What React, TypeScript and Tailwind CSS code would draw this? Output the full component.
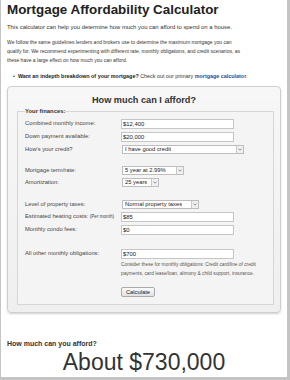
import React from "react";

const labelCls = "w-[96px] shrink-0 pt-[1px] text-[5.8px] leading-[7px] text-[#444]";

function TextInput({ value }: { value: string }) {
  return (
    <div className="flex h-[10px] w-[113px] items-center border border-[#c6c6c6] bg-white px-[1px] text-[5.9px] text-[#222]">
      {value}
    </div>
  );
}

function Select({ value, width }: { value: string; width: string }) {
  return (
    <div className={`flex h-[9px] items-center justify-between border border-[#bdbdbd] bg-white pl-[2px] text-[5.8px] text-[#222] ${width}`}>
      <span className="truncate">{value}</span>
      <span className="flex h-full w-[7px] items-center justify-center border-l border-[#c8c8c8] bg-[#f0f0f0]">
        <svg width="4" height="3" viewBox="0 0 4 3">
          <path d="M0.5 0.6 L2 2.2 L3.5 0.6" fill="none" stroke="#666" strokeWidth="0.7" />
        </svg>
      </span>
    </div>
  );
}

function Row({ label, children }: { label: React.ReactNode; children: React.ReactNode }) {
  return (
    <div className="flex items-start">
      <div className={labelCls}>{label}</div>
      {children}
    </div>
  );
}

export default function App() {
  return (
    <div className="h-[380px] w-[290px] overflow-hidden border-l border-r-[3px] border-b-[3px] border-[#c4c4c4] bg-white font-['Liberation_Sans',Arial,sans-serif] text-[#333]">
      <div className="px-[6px] pt-[1px]">
        <h1 className="text-[13.4px] font-bold leading-[17px] text-[#222]">Mortgage Affordability Calculator</h1>

        <p className="mt-[5px] text-[5.9px] leading-[9px]">
          This calculator can help you determine how much you can afford to spend on a house.
        </p>

        {/* keep the reference's line breaks */}
        <p className="mt-[6px] whitespace-nowrap text-[5px] leading-[9px]">
          We follow the same guidelines lenders and brokers use to determine the maximum mortgage you can
          <br />
          qualify for. We recommend experimenting with different rate, monthly obligations, and credit scenarios, as
          <br />
          these have a large effect on how much you can afford.
        </p>

        <ul className="mt-[7px] pl-[6px] text-[5.4px] leading-[9px]">
          <li className="flex gap-[3px]">
            <span>•</span>
            <span>
              <b className="text-[#222]">Want an indepth breakdown of your mortgage?</b> Check out our primary{" "}
              <b className="text-[#1f4e96]">mortgage calculator</b>.
            </span>
          </li>
        </ul>

        <div className="mt-[5px] rounded-[4px] border border-[#cfcfcf] bg-gradient-to-b from-[#f7f7f7] to-[#efefef] px-[9px] pb-[7px] pt-[7px] shadow-[0_1px_2px_rgba(0,0,0,0.18)]">
          <h2 className="text-center text-[9.2px] font-bold leading-[12px] text-[#333]">How much can I afford?</h2>

          <fieldset className="mt-[2px] border border-[#d6d6d6] bg-[#f4f4f4] pl-[7px] pr-[4px] pb-[7px]">
            <legend className="text-[5.9px] font-bold leading-[7px] text-[#333]">Your finances:</legend>

            <div className="mt-[4px] flex flex-col gap-[3px]">
              <Row label="Combined monthly income:">
                <TextInput value="$12,400" />
              </Row>
              <Row label="Down payment available:">
                <TextInput value="$20,000" />
              </Row>
              <Row label="How's your credit?">
                <Select value="I have good credit" width="w-[122px] ml-[1px]" />
              </Row>

              <div className="h-[6px]" />

              <Row label="Mortgage term/rate:">
                <Select value="5 year at 2.99%" width="w-[62px] ml-[1px]" />
              </Row>
              <Row label="Amortization:">
                <Select value="25 years" width="w-[37px] ml-[1px]" />
              </Row>

              <div className="h-[7px]" />

              <Row label="Level of property taxes:">
                <Select value="Normal property taxes" width="w-[77px] ml-[1px]" />
              </Row>
              <Row
                label={
                  <>
                    Estimated heating costs: <span className="text-[4.6px]">(Per month)</span>
                  </>
                }
              >
                <TextInput value="$85" />
              </Row>
              <Row label="Monthly condo fees:">
                <TextInput value="$0" />
              </Row>

              <div className="h-[8px]" />

              <Row label="All other monthly obligations:">
                <div className="flex flex-col">
                  <TextInput value="$700" />
                  <p className="mt-[1px] w-[148px] text-[4.8px] leading-[9px] text-[#555]">
                    Consider these for monthly obligations: Credit card/line of credit payments, card lease/loan, alimony &amp;
                    child support, insurance.
                  </p>
                  <button className="mt-[9px] h-[10px] w-[34px] rounded-[2px] border border-[#a9a9a9] bg-gradient-to-b from-[#fafafa] to-[#e2e2e2] text-[5.8px] leading-[8px] text-[#222]">
                    Calculate
                  </button>
                </div>
              </Row>
            </div>
          </fieldset>
        </div>

        <h3 className="mt-[26px] text-[7px] font-bold leading-[9px] text-[#333]">How much can you afford?</h3>
        <div className="mt-[2px] text-center text-[23px] leading-[24px] text-[#333]">About $730,000</div>
      </div>
    </div>
  );
}
